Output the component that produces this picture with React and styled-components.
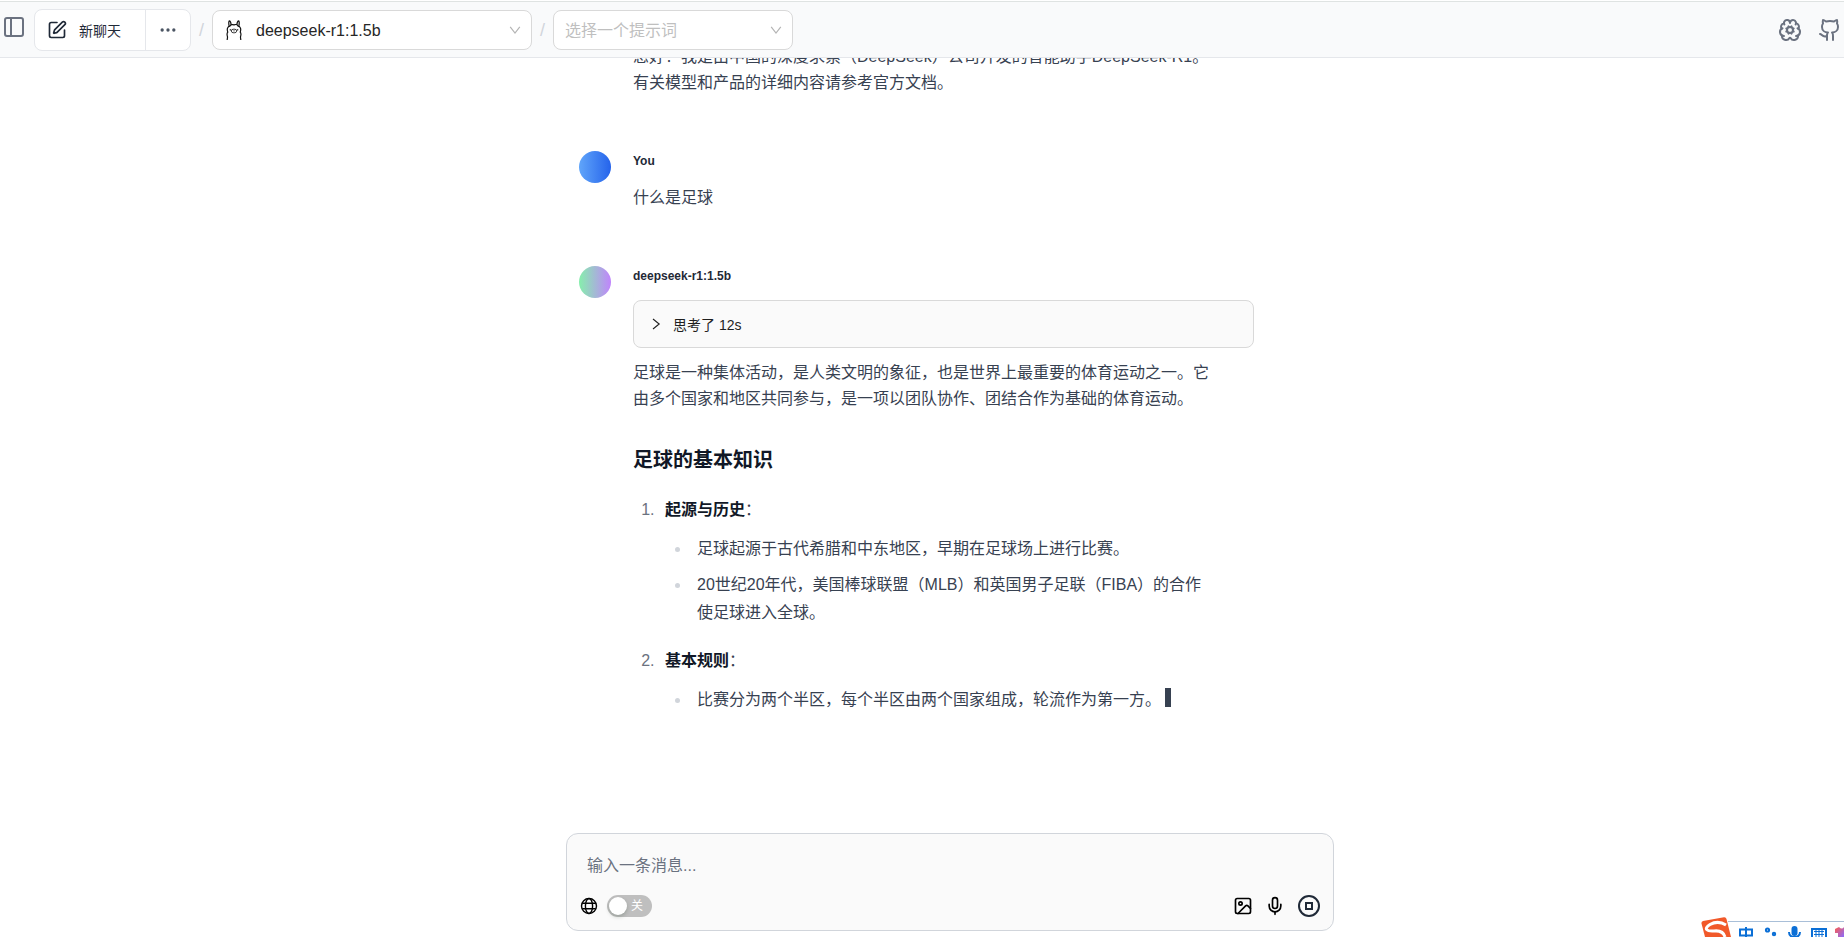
import React from 'react';
import styled, { createGlobalStyle } from 'styled-components';
import {
  PanelLeft,
  SquarePen,
  Ellipsis,
  BrainCog,
  Github,
  Image as ImageIcon,
  Mic,
} from 'lucide-react';

const GlobalStyle = createGlobalStyle`
  * {
    box-sizing: border-box;
  }
  html,
  body,
  #root {
    height: 100%;
    margin: 0;
  }
  body {
    background: #fff;
    color: #374151;
    font-family: 'Liberation Sans', 'Noto Sans CJK SC', sans-serif;
    font-size: 16px;
    overflow: hidden;
  }
  button {
    font: inherit;
    color: inherit;
    background: none;
    border: 0;
    padding: 0;
    cursor: pointer;
  }
`;

const Page = styled.div`
  display: flex;
  flex-direction: column;
  height: 100vh;
`;

const Header = styled.header`
  display: flex;
  align-items: center;
  flex: none;
  height: 58px;
  padding: 2px 2px 0;
  background: #f9fafb;
  border-top: 1px solid #fff;
  border-bottom: 1px solid #e5e7eb;
  box-shadow: inset 0 1px 0 #dfe3e2;
`;

const IconButton = styled.button`
  display: flex;
  align-items: center;
  justify-content: center;
  color: ${(props) => props.$color || '#6b7280'};
`;

const SidebarButton = styled(IconButton)`
  align-self: flex-start;
  margin: 12px 8px 0 0;
`;

const ButtonGroup = styled.div`
  display: flex;
  height: 42px;
  border: 1px solid #e5e7eb;
  border-radius: 8px;
  background: #fff;
`;

const NewChatButton = styled.button`
  display: flex;
  align-items: center;
  gap: 12px;
  width: 111px;
  padding-left: 12px;
  border-right: 1px solid #e5e7eb;
  color: #1f2937;
  font-size: 14px;
`;

const MoreButton = styled(IconButton)`
  width: 44px;
  color: #4b5563;
`;

const Slash = styled.span`
  width: 21px;
  color: #d1d5db;
  font-size: 18px;
  text-align: center;
`;

const SelectBox = styled.label`
  display: flex;
  align-items: center;
  gap: 14px;
  width: ${(props) => props.$width}px;
  height: 40px;
  padding: 0 10px 0 ${(props) => props.$left}px;
  border: 1px solid #d9d9d9;
  border-radius: 8px;
  background: #fff;
  color: #b4b4b4;
`;

const Select = styled.select`
  flex: 1;
  min-width: 0;
  border: 0;
  outline: 0;
  padding: 0;
  appearance: none;
  background: none;
  color: ${(props) => (props.$empty ? '#bfbfbf' : '#262626')};
  font: inherit;
`;

const HeaderLinks = styled.div`
  display: flex;
  gap: 16px;
  margin-left: auto;

  a,
  button {
    display: flex;
    color: #6b7280;
  }
`;

const Chat = styled.main`
  display: flex;
  flex: 1;
  flex-direction: column;
  min-height: 0;
  overflow: hidden;
  padding-left: 56px;
`;

const Messages = styled.div`
  display: flex;
  flex: 1;
  flex-direction: column;
  justify-content: flex-end;
  gap: 55px;
  min-height: 0;
  width: 100%;
  max-width: 768px;
  margin: 0 auto;
  padding: 0 80px 119px 13px;
  overflow: hidden;
`;

const Message = styled.article`
  display: flex;
  flex: none;
  gap: 22px;
`;

const Avatar = styled.div`
  flex: none;
  width: 32px;
  height: 32px;
  border-radius: 50%;
  background: linear-gradient(to right, ${(props) => props.$from}, ${(props) => props.$to});
`;

const MessageBody = styled.div`
  flex: 1;
  min-width: 0;
`;

const Sender = styled.div`
  margin: 2px 0 16px;
  color: #1f2937;
  font-size: 12px;
  font-weight: 700;
  line-height: 16px;
`;

const Prose = styled.div`
  max-width: 578px;
  line-height: 26px;

  p {
    margin: 0;
  }

  h3 {
    margin: 32px 0 20px;
    color: #111827;
    font-size: 20px;
    line-height: 32px;
  }

  strong {
    color: #111827;
  }

  ol,
  ul {
    margin: 0;
    padding-left: 26px;
    line-height: 28px;
  }

  li {
    padding-left: 6px;
  }

  ol > li + li {
    margin-top: 20px;
  }

  ol > li::marker {
    color: #6b7280;
  }

  ul {
    margin-top: 11px;
    list-style: disc;
  }

  ul > li::marker {
    color: #d1d5db;
  }

  ul > li + li {
    margin-top: 8px;
  }
`;

const Thinking = styled.button`
  display: flex;
  align-items: center;
  gap: 11px;
  width: 100%;
  height: 48px;
  margin: 0 0 12px;
  padding: 0 16px;
  border: 1px solid #d9d9d9;
  border-radius: 8px;
  background: #fafafa;
  color: #1f1f1f;
  font-size: 14px;
`;

const Cursor = styled.span`
  display: inline-block;
  width: 6px;
  height: 19px;
  margin-left: 4px;
  background: #374151;
  vertical-align: -2px;
`;

const Composer = styled.form`
  display: flex;
  flex: none;
  flex-direction: column;
  width: 100%;
  max-width: 768px;
  margin: 0 auto 6px;
  padding: 10px 12px 12px 13px;
  border: 1px solid #d1d5db;
  border-radius: 12px;
  background: #fafafa;
`;

const MessageInput = styled.textarea`
  height: 44px;
  padding: 10px 7px;
  border: 0;
  outline: 0;
  resize: none;
  background: none;
  font: inherit;
  line-height: 24px;

  &::placeholder {
    color: #6b7280;
  }
`;

const Tools = styled.div`
  display: flex;
  align-items: center;
  justify-content: space-between;
  margin-top: 6px;
`;

const ToolGroup = styled.div`
  display: flex;
  align-items: center;
  gap: ${(props) => props.$gap}px;
  color: #000;
`;

const Toggle = styled.label`
  display: flex;
  align-items: center;
  gap: 4px;
  width: 45px;
  height: 22px;
  padding: 2px;
  border-radius: 11px;
  background: #bfbfbf;
  color: #fff;
  font-size: 12px;
  line-height: 18px;

  input {
    appearance: none;
    width: 18px;
    height: 18px;
    margin: 0;
    border-radius: 50%;
    background: #fff;
    box-shadow: 0 2px 4px rgba(0, 35, 11, 0.2);
  }
`;

// floating input method strip, sits over the page corner
const ImeBar = styled.div`
  position: fixed;
  right: 0;
  bottom: 0;
  width: 144px;
  height: 20px;
`;

function ArrowDown() {
  return (
    <svg width="12" height="12" viewBox="0 0 12 12" fill="none" stroke="currentColor" strokeWidth="1.200">
      <path d="M1.200 2.800L6 9l4.800-6.200" />
    </svg>
  );
}

function ArrowRight() {
  return (
    <svg width="12" height="12" viewBox="0 0 12 12" fill="none" stroke="currentColor" strokeWidth="1.100">
      <path d="M3 1l6.200 5L3 11" />
    </svg>
  );
}

function Llama() {
  return (
    <svg width="16" height="20" viewBox="0 0 16 20" fill="none" stroke="#111" strokeWidth="1.200">
      <path d="M1.200 20c0-1.600.6-2 .2-3.600-.6-2-.4-3.400.4-4.200C.6 9 1.600 6.400 3.800 6.200 4.600 4.600 6.600 4.200 8 4.900c1.400-.7 3.400-.3 4.200 1.300 2.200.2 3.200 2.800 2 6 .8.800 1 2.200.4 4.200-.4 1.600.2 2 .2 3.600" />
      <path d="M3.200 6.300C2.500 3.500 2.700.9 3.400.9S4.900 2.600 5.200 5M12.800 6.300c.7-2.800.5-5.400-.2-5.400S11.100 2.600 10.800 5" />
      <ellipse cx="8" cy="11" rx="2.700" ry="1.900" strokeWidth=".8" />
      <path d="M7.500 10.400l.5.500.5-.5M8 10.900v.8" strokeWidth=".6" />
      <path d="M4.200 9.800h.5M11.300 9.800h.5" strokeLinecap="round" />
    </svg>
  );
}

function Globe() {
  return (
    <svg width="18" height="18" viewBox="0 0 18 18" fill="none" stroke="currentColor" strokeWidth="1.400">
      <circle cx="9" cy="9" r="7.500" />
      <ellipse cx="9" cy="9" rx="3.600" ry="7.500" />
      <path d="M2.200 6.200h13.600M2.200 11.800h13.600" />
    </svg>
  );
}

function Stop() {
  return (
    <svg width="24" height="24" viewBox="0 0 24 24" fill="none" stroke="#1f2937" strokeWidth="2">
      <circle cx="12" cy="12" r="10" />
      <rect x="9" y="9" width="6" height="6" />
    </svg>
  );
}

function InputMethodBar() {
  return (
    <ImeBar>
      <svg width="144" height="20" viewBox="0 0 144 20">
        <defs>
          <linearGradient id="shirt" x1="0" y1="0" x2="1" y2="1">
            <stop offset="0" stopColor="#ff5b4a" />
            <stop offset="1" stopColor="#8a6cff" />
          </linearGradient>
        </defs>
        <path d="M28 4.500H144" stroke="#a9bfd8" />
        <path d="M1.500 6.500Q1 4.500 3 4L24 .2Q26 0 26.500 2L31 20H5z" fill="#f1592a" />
        <path d="M26 8Q18 3 10 7.500C3 12 7 14.500 14 14q9-1 11 6" fill="none" stroke="#fff" strokeWidth="3" />
        <g fill="none" stroke="#0b6fd6" strokeWidth="2">
          <path d="M40 12.500h12v6H40zM46 10v10" />
          <circle cx="67.500" cy="13" r="1.600" />
          <circle cx="74" cy="17" r="1.200" />
          <path d="M89 15q0 5 5.500 5t5.500-5" />
          <path d="M112 12h14v10h-14z" />
          <path d="M114 14.500h10M114 17.500h10M116 13v7M119 13v7M122 13v7" strokeWidth="1" />
        </g>
        <rect x="91.500" y="9" width="6" height="10" rx="3" fill="#0b6fd6" />
        <path d="M135 12l4-2q3 3 5 0v10h-6v-4h-3z" fill="url(#shirt)" />
      </svg>
    </ImeBar>
  );
}

function App() {
  return (
    <Page>
      <GlobalStyle />
      <Header>
        <SidebarButton aria-label="侧边栏">
          <PanelLeft size={24} />
        </SidebarButton>
        <ButtonGroup>
          <NewChatButton>
            <SquarePen size={20} />
            新聊天
          </NewChatButton>
          <MoreButton aria-label="更多">
            <Ellipsis size={20} />
          </MoreButton>
        </ButtonGroup>
        <Slash>/</Slash>
        <SelectBox $width={320} $left={13}>
          <Llama />
          <Select aria-label="模型">
            <option>deepseek-r1:1.5b</option>
          </Select>
          <ArrowDown />
        </SelectBox>
        <Slash>/</Slash>
        <SelectBox $width={240} $left={11}>
          <Select aria-label="提示词" $empty>
            <option>选择一个提示词</option>
          </Select>
          <ArrowDown />
        </SelectBox>
        <HeaderLinks>
          <button aria-label="模型设置">
            <BrainCog size={24} />
          </button>
          <a href="#" aria-label="GitHub">
            <Github size={24} />
          </a>
        </HeaderLinks>
      </Header>

      <Chat>
        <Messages>
          <Message>
            <Avatar $from="#86efac" $to="#c084fc" />
            <MessageBody>
              <Sender>deepseek-r1:1.5b</Sender>
              <Prose>
                <p>您好！我是由中国的深度求索（DeepSeek）公司开发的智能助手DeepSeek-R1。有关模型和产品的详细内容请参考官方文档。</p>
              </Prose>
            </MessageBody>
          </Message>
          <Message>
            <Avatar $from="#60a5fa" $to="#2563eb" />
            <MessageBody>
              <Sender>You</Sender>
              <Prose>
                <p>什么是足球</p>
              </Prose>
            </MessageBody>
          </Message>
          <Message>
            <Avatar $from="#86efac" $to="#c084fc" />
            <MessageBody>
              <Sender>deepseek-r1:1.5b</Sender>
              <Thinking>
                <ArrowRight />
                思考了 12s
              </Thinking>
              <Prose>
                <p>足球是一种集体活动，是人类文明的象征，也是世界上最重要的体育运动之一。它由多个国家和地区共同参与，是一项以团队协作、团结合作为基础的体育运动。</p>
                <h3>足球的基本知识</h3>
                <ol>
                  <li>
                    <strong>起源与历史</strong>：
                    <ul>
                      <li>足球起源于古代希腊和中东地区，早期在足球场上进行比赛。</li>
                      <li>20世纪20年代，美国棒球联盟（MLB）和英国男子足联（FIBA）的合作使足球进入全球。</li>
                    </ul>
                  </li>
                  <li>
                    <strong>基本规则</strong>：
                    <ul>
                      <li>
                        比赛分为两个半区，每个半区由两个国家组成，轮流作为第一方。
                        <Cursor />
                      </li>
                    </ul>
                  </li>
                </ol>
              </Prose>
            </MessageBody>
          </Message>
        </Messages>

        <Composer>
          <MessageInput aria-label="消息" placeholder="输入一条消息..." />
          <Tools>
            <ToolGroup $gap={9}>
              <Globe />
              <Toggle>
                <input type="checkbox" role="switch" aria-label="联网搜索" />
                关
              </Toggle>
            </ToolGroup>
            <ToolGroup $gap={12}>
              <IconButton type="button" $color="#000" aria-label="图片">
                <ImageIcon size={20} />
              </IconButton>
              <IconButton type="button" $color="#000" aria-label="语音">
                <Mic size={20} />
              </IconButton>
              <IconButton type="button" aria-label="停止">
                <Stop />
              </IconButton>
            </ToolGroup>
          </Tools>
        </Composer>
      </Chat>
      <InputMethodBar />
    </Page>
  );
}

export default App;
